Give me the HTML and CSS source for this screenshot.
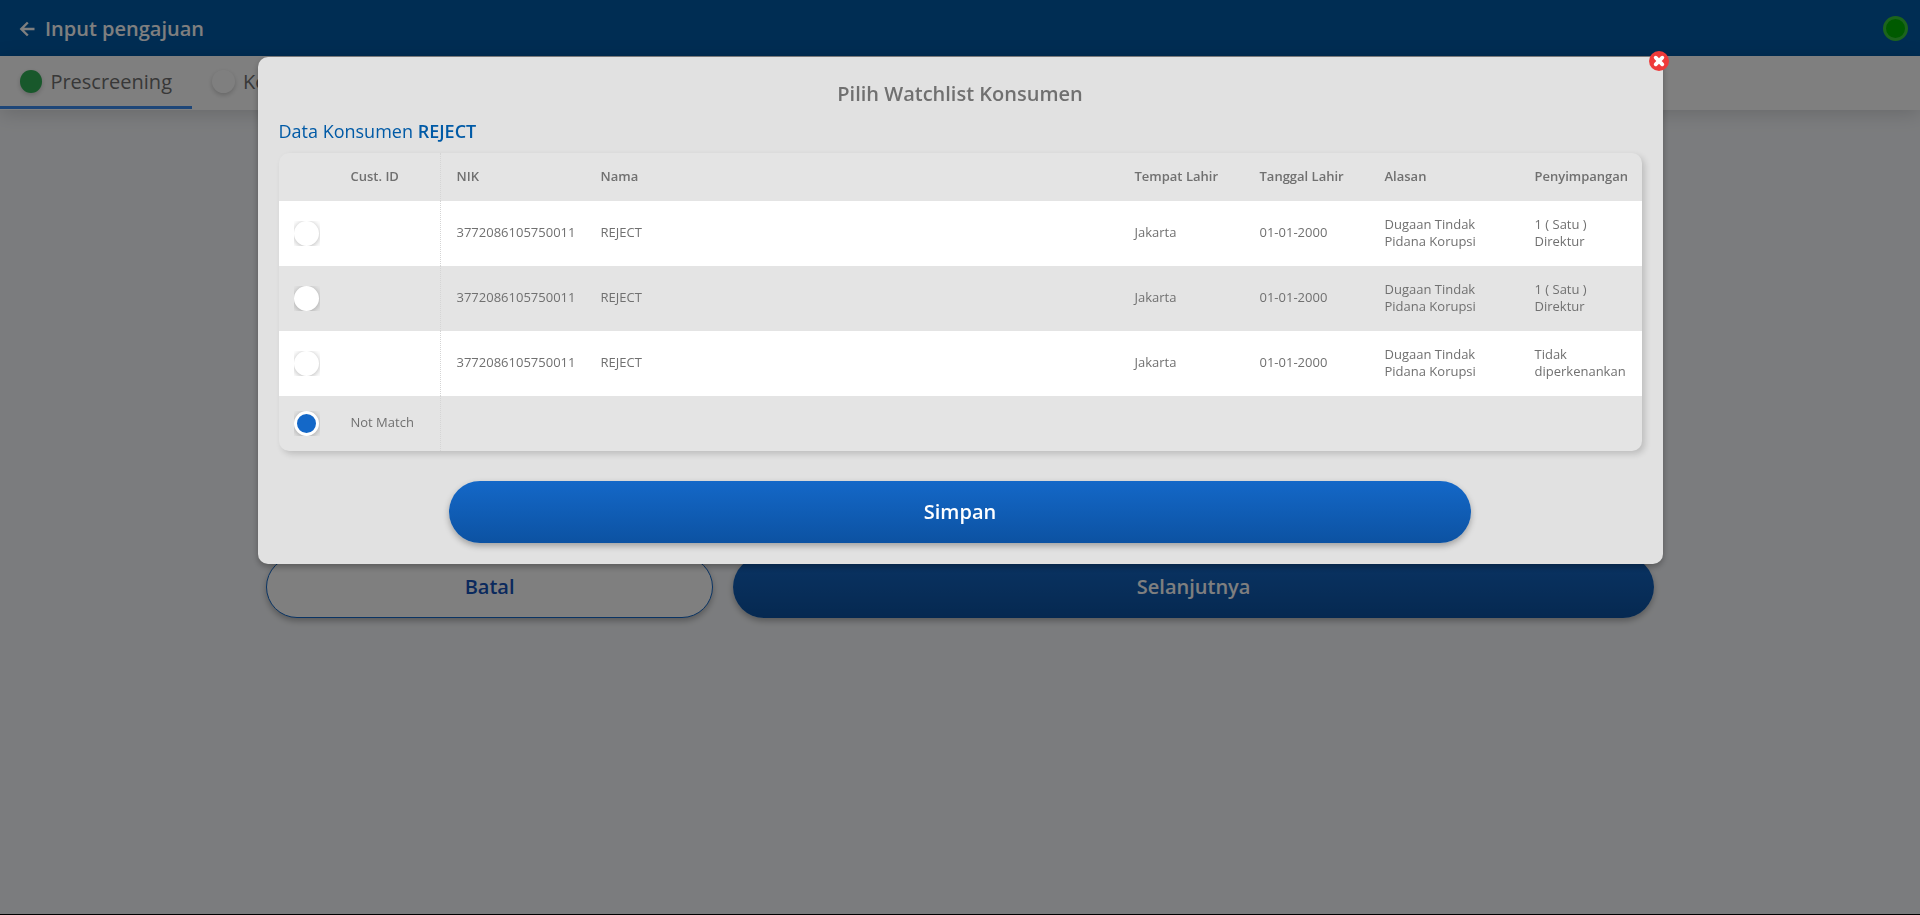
FILE: index.html
```html
<!DOCTYPE html>
<html lang="id">
<head>
<meta charset="utf-8">
<meta name="viewport" content="width=device-width, initial-scale=1">
<title>Input pengajuan</title>
<link rel="stylesheet" href="styles.css">
</head>
<body>
<div class="app">
  <header class="topbar">
    <button class="back" type="button" aria-label="Kembali">
      <svg width="16" height="16" viewBox="0 0 16 16" fill="none" stroke="currentColor" stroke-width="2.4"><path d="M15.500 8H2.500M8.800 1.500L2.300 8l6.500 6.500"/></svg>
    </button>
    <h1 class="topbar-title">Input pengajuan</h1>
    <span class="status"></span>
  </header>
  <nav class="tabs">
    <a class="tab tab-active" href="#"><span class="dot dot-done"></span>Prescreening</a>
    <a class="tab" href="#"><span class="dot"></span>Konsumen</a>
  </nav>
  <main class="page">
    <div class="actions">
      <button class="btn btn-outline" type="button">Batal</button>
      <button class="btn btn-primary" type="button">Selanjutnya</button>
    </div>
  </main>
</div>

<div class="overlay">
  <section class="modal" role="dialog" aria-labelledby="modal-title">
    <button class="close" type="button" aria-label="Tutup">
      <svg width="12" height="12" viewBox="0 0 12 12" fill="none" stroke="currentColor" stroke-width="3.800" stroke-linecap="round"><path d="M2.700 2.700l6.600 6.600M9.300 2.700l-6.600 6.600"/></svg>
    </button>
    <h2 class="modal-title" id="modal-title">Pilih Watchlist Konsumen</h2>
    <p class="subtitle">Data Konsumen <strong>REJECT</strong></p>
    <table class="grid">
      <colgroup>
        <col class="c-pick"><col class="c-cust"><col class="c-nik"><col><col class="c-birth"><col class="c-birth"><col class="c-reason"><col class="c-dev">
      </colgroup>
      <thead>
        <tr><th></th><th class="split">Cust. ID</th><th>NIK</th><th>Nama</th><th>Tempat Lahir</th><th>Tanggal Lahir</th><th>Alasan</th><th>Penyimpangan</th></tr>
      </thead>
      <tbody>
        <tr><td><label class="pick"><input type="radio" name="match" aria-label="Pilih data 1"></label></td><td class="split"></td><td>3772086105750011</td><td>REJECT</td><td>Jakarta</td><td>01-01-2000</td><td>Dugaan Tindak Pidana Korupsi</td><td>1 ( Satu )<br>Direktur</td></tr>
        <tr><td><label class="pick"><input type="radio" name="match" aria-label="Pilih data 2"></label></td><td class="split"></td><td>3772086105750011</td><td>REJECT</td><td>Jakarta</td><td>01-01-2000</td><td>Dugaan Tindak Pidana Korupsi</td><td>1 ( Satu )<br>Direktur</td></tr>
        <tr><td><label class="pick"><input type="radio" name="match" aria-label="Pilih data 3"></label></td><td class="split"></td><td>3772086105750011</td><td>REJECT</td><td>Jakarta</td><td>01-01-2000</td><td>Dugaan Tindak Pidana Korupsi</td><td>Tidak diperkenankan</td></tr>
        <tr class="last"><td><label class="pick"><input type="radio" name="match" id="none" checked></label></td><td class="split"><label for="none">Not Match</label></td><td></td><td></td><td></td><td></td><td></td><td></td></tr>
      </tbody>
    </table>
    <button class="btn btn-primary save" type="button">Simpan</button>
  </section>
</div>
</body>
</html>
```
FILE: styles.css
```css
* { box-sizing: border-box; }
html { background: #000; }
body {
  margin: 0;
  font-family: "Open Sans", "Noto Sans", sans-serif;
  color: #707070;
}
button { font: inherit; cursor: pointer; }
.app {
  min-height: calc(100vh - 1px);
  background: #f7f9fc;
}

.topbar {
  display: flex;
  align-items: center;
  height: 56px;
  padding: 2px 12px 0 19px;
  background: #005aa6;
  color: #fff;
}
.back {
  display: flex;
  margin: 0 10px 0 0;
  padding: 0;
  border: 0;
  background: none;
  color: inherit;
}
.topbar-title {
  flex: 1;
  margin: 0;
  font-size: 20px;
  font-weight: 600;
  line-height: 28px;
}
.status {
  width: 25px;
  height: 25px;
  margin-bottom: 2px;
  border: 3px solid #38c838;
  border-radius: 50%;
  background: #00b400;
}

.tabs {
  display: flex;
  height: 54px;
  background: #fff;
  box-shadow: 0 3px 20px rgba(0, 0, 0, .16);
}
.tab {
  display: flex;
  align-items: center;
  gap: 8px;
  width: 192px;
  padding: 1px 20px 0;
  border-bottom: 3px solid transparent;
  margin-bottom: 1px;
  color: #707070;
  font-size: 20px;
  text-decoration: none;
}
.tab-active { border-color: #3c8cf0; }
.dot {
  width: 23px;
  height: 23px;
  border-radius: 50%;
  background: #fff;
  box-shadow: 0 2px 5px rgba(0, 0, 0, .2);
}
.dot-done { background: #31b057; }

.page {
  max-width: 1388px;
  margin: 0 auto;
  padding-top: 446px;
}
.actions {
  display: grid;
  grid-template-columns: 17fr 35fr;
  gap: 20px;
}
.btn {
  height: 62px;
  padding: 0 20px 2px;
  border: 0;
  border-radius: 31px;
  font-size: 20px;
  font-weight: 600;
  box-shadow: 0 3px 6px rgba(0, 0, 0, .29);
}
.btn-primary {
  background: linear-gradient(#1468c8, #0c52a2);
  color: #fff;
}
.btn-outline {
  border: 1px solid #1468c8;
  background: #fff;
  color: #1453ba;
}

.overlay {
  position: fixed;
  inset: 0;
  padding: 57px 20px 20px;
  background: rgba(0, 0, 0, .5);
}
.modal {
  position: relative;
  display: flex;
  flex-direction: column;
  max-width: 1405px;
  margin: 0 auto;
  padding: 21px;
  border-radius: 10px;
  background: #e1e1e1;
  box-shadow: 0 3px 6px rgba(0, 0, 0, .29);
}
.close {
  position: absolute;
  top: -6px;
  right: -6px;
  display: flex;
  align-items: center;
  justify-content: center;
  width: 20px;
  height: 20px;
  padding: 0;
  border: 0;
  border-radius: 50%;
  background: #ee3a3a;
  color: #fff;
}
.modal-title {
  margin: 2px 0 11px;
  font-size: 20px;
  font-weight: 600;
  line-height: 28px;
  text-align: center;
}
.subtitle {
  margin: 0 0 10px;
  color: #005aa6;
  font-size: 18px;
  line-height: 24px;
}
.subtitle strong { font-weight: 600; }

.grid {
  width: 100%;
  table-layout: fixed;
  border-spacing: 0;
  border-radius: 10px;
  overflow: hidden;
  background: #e4e4e4;
  box-shadow: 3px 3px 6px rgba(0, 0, 0, .16);
  font-size: 13px;
  line-height: 17px;
}
.c-pick { width: 56px; }
.c-cust { width: 106px; }
.c-nik { width: 144px; }
.c-birth { width: 125px; }
.c-reason { width: 150px; }
.c-dev { width: 123px; }
.grid th,
.grid td {
  height: 65px;
  padding: 0 12px 2px 16px;
  text-align: left;
  vertical-align: middle;
}
.grid td:first-child { padding: 0 15px; }
.grid th {
  height: 48px;
  font-weight: 600;
  white-space: nowrap;
}
.grid .last td { height: 55px; }
.grid tbody tr:nth-child(odd) { background: #fff; }
.grid .split { border-right: 1px dotted #d5d5d5; }
.pick {
  display: block;
  width: 26px;
  height: 25px;
  overflow: hidden;
}
.pick input {
  display: block;
  appearance: none;
  width: 25px;
  height: 25px;
  margin: 0;
  border: 3px solid #fff;
  border-radius: 50%;
  background: #fff;
  box-shadow: 0 1px 6px rgba(0, 0, 0, .3);
}
.pick input:checked { background: #1468c8; }
.save {
  align-self: center;
  width: 75%;
  margin-top: 30px;
}
```
